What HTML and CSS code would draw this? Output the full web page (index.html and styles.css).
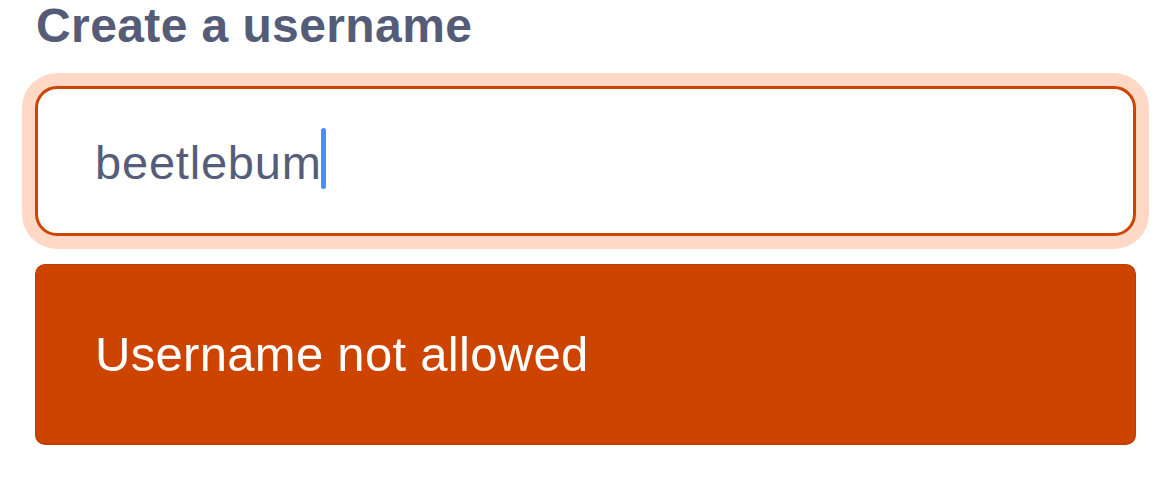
FILE: index.html
```html
<!DOCTYPE html>
<html>
<head>
<meta charset="utf-8">
<link rel="stylesheet" href="styles.css">
</head>
<body>
<div class="page">
  <h1 class="title">Create a username</h1>
  <div class="field">
    <span class="value">beetlebum</span><span class="caret"></span>
  </div>
  <div class="error">Username not allowed</div>
</div>
</body>
</html>
```
FILE: styles.css
```css
html, body {
  margin: 0;
  padding: 0;
  background: #ffffff;
}
.page {
  padding: 0 34px 0 35px;
  font-family: "Liberation Sans", Arial, sans-serif;
}
.title {
  margin: 0;
  font-size: 48px;
  line-height: 52px;
  font-weight: bold;
  letter-spacing: 0.4px;
  color: #555c78;
  padding-left: 1px;
}
.field {
  margin-top: 34px;
  height: 150px;
  box-sizing: border-box;
  border: 3px solid #cc4400;
  border-radius: 22px;
  box-shadow: 0 0 0 13px #ffd9c6;
  display: flex;
  align-items: center;
  padding-left: 57px;
  background: #fff;
}
.value {
  font-size: 47px;
  letter-spacing: 0.8px;
  color: #565d7a;
  line-height: 1;
  position: relative;
  top: 1px;
}
.caret {
  display: inline-block;
  width: 5px;
  height: 61px;
  border-radius: 3px;
  background: #4a8ff6;
  margin-left: -1px;
  position: relative;
  top: -3px;
}
.error {
  margin-top: 28px;
  height: 181px;
  box-sizing: border-box;
  background: #cc4400;
  border: 1px solid #bb3d00;
  border-bottom-width: 2px;
  border-radius: 10px;
  display: flex;
  align-items: center;
  padding-left: 59px;
  color: #ffffff;
  font-size: 49px;
  letter-spacing: 0.3px;
}
```
